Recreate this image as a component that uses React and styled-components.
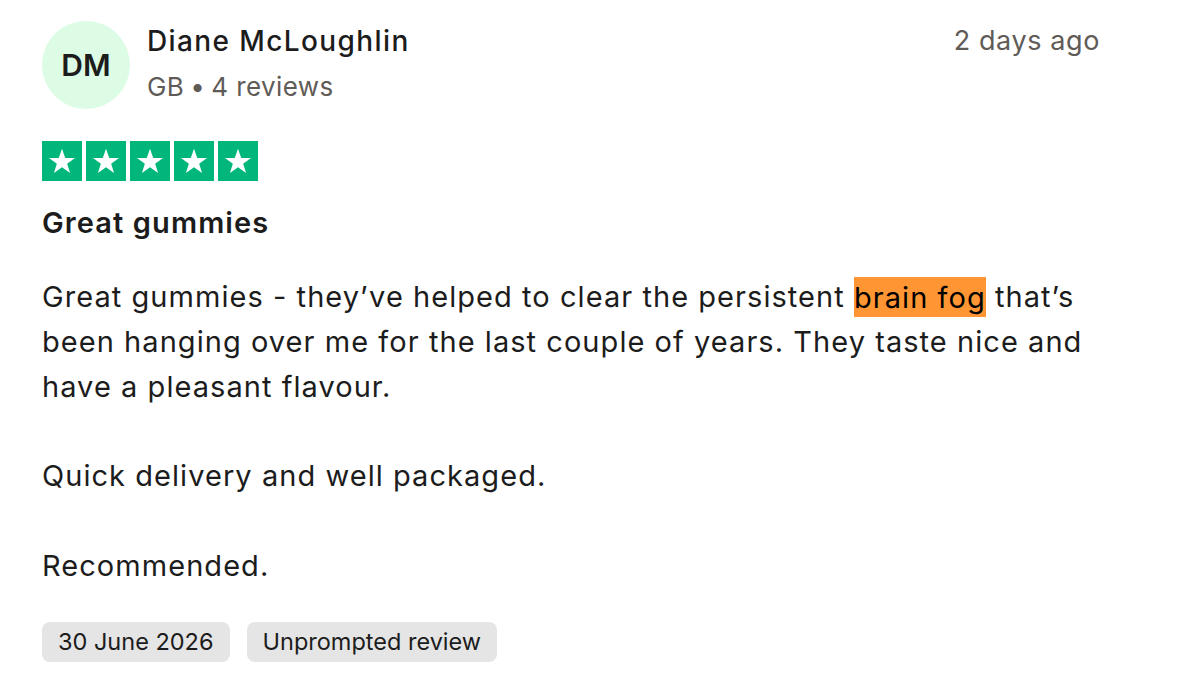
import React from 'react';
import styled, { createGlobalStyle } from 'styled-components';

const GlobalStyle = createGlobalStyle`
  html, body {
    margin: 0;
    padding: 0;
    background: #ffffff;
  }
  body {
    font-family: Inter, "Noto Sans", Arial, sans-serif;
    color: #1c1c1c;
    -webkit-font-smoothing: antialiased;
  }
`;

const Card = styled.article`
  padding: 21px 98px 0 42px;
  display: flex;
  flex-direction: column;
`;

const Header = styled.header`
  display: flex;
  align-items: flex-start;
  gap: 17px;
`;

const Avatar = styled.div`
  width: 88px;
  height: 88px;
  border-radius: 50%;
  background: #dcfce6;
  display: flex;
  align-items: center;
  justify-content: center;
  font-size: 30px;
  font-weight: 600;
  color: #1c1c1c;
  flex-shrink: 0;
`;

const Consumer = styled.div`
  display: flex;
  flex-direction: column;
  flex: 1;
`;

const Name = styled.div`
  font-size: 28px;
  font-weight: 500;
  line-height: 40px;
  letter-spacing: 1.4px;
`;

const Meta = styled.div`
  font-size: 26px;
  line-height: 40px;
  margin-top: 6px;
  color: #5f5b57;
  letter-spacing: 0.4px;
`;

const Dot = styled.span`
  margin: 0 6px;
`;

const Time = styled.time`
  font-size: 27px;
  line-height: 40px;
  color: #5f5b57;
  letter-spacing: 0.6px;
`;

const Stars = styled.div`
  display: flex;
  gap: 4px;
  margin-top: 32px;
`;

const StarBox = styled.div`
  width: 40px;
  height: 40px;
  background: #00b67a;
  display: flex;
  align-items: center;
  justify-content: center;
`;

const Title = styled.h2`
  margin: 22px 0 0;
  font-size: 29px;
  font-weight: 600;
  line-height: 40px;
  letter-spacing: 1.1px;
`;

const Body = styled.p`
  margin: 32px 0 0;
  font-size: 29px;
  line-height: 44.8px;
  letter-spacing: 1.05px;
  white-space: pre-line;
`;

const Mark = styled.mark`
  background: #ff9633;
  color: #000000;
  padding: 2.5px 0;
`;

const Tags = styled.div`
  display: flex;
  gap: 17px;
  margin-top: 33px;
`;

const Tag = styled.span`
  display: inline-flex;
  align-items: center;
  height: 40px;
  padding: 0 16px;
  border-radius: 8px;
  background: #e5e5e5;
  font-size: 23.5px;
  color: #1c1c1c;
`;

function Star() {
  return (
    <svg width="30" height="30" viewBox="0 0 24 24">
      <path
        d="M12 2.2l2.6 7.3h7.8l-6.3 4.6 2.4 7.5L12 17l-6.5 4.6 2.4-7.5-6.3-4.6h7.8z"
        fill="#ffffff"
      />
    </svg>
  );
}

export default function App() {
  return (
    <>
      <GlobalStyle />
      <Card>
        <Header>
          <Avatar>DM</Avatar>
          <Consumer>
            <Name>Diane McLoughlin</Name>
            <Meta>
              GB<Dot>•</Dot>4 reviews
            </Meta>
          </Consumer>
          <Time>2 days ago</Time>
        </Header>
        <Stars>
          {[0, 1, 2, 3, 4].map(i => (
            <StarBox key={i}>
              <Star />
            </StarBox>
          ))}
        </Stars>
        <Title>Great gummies</Title>
        <Body>
          Great gummies - they’ve helped to clear the persistent <Mark>brain fog</Mark> that’s been hanging over me for the last couple of years. They taste nice and have a pleasant flavour.
          {'\n\n'}Quick delivery and well packaged.
          {'\n\n'}Recommended.
        </Body>
        <Tags>
          <Tag>30 June 2026</Tag>
          <Tag>Unprompted review</Tag>
        </Tags>
      </Card>
    </>
  );
}
